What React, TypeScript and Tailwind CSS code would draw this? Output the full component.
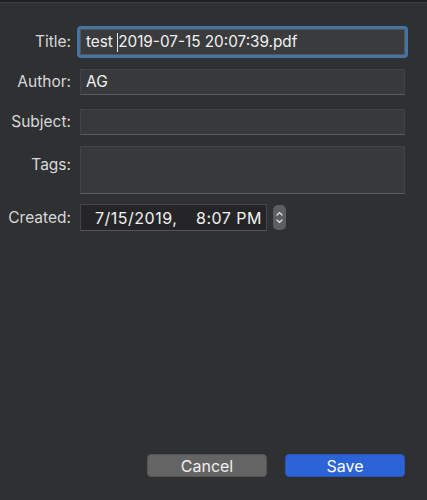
import React from "react";

const font = { fontFamily: "Inter, 'Liberation Sans', sans-serif" };

function Label({ children, className = "" }: { children: React.ReactNode; className?: string }) {
  return (
    <div className={`text-right text-[15.5px] text-[#d8d8d8] pr-[9px] leading-none ${className}`}>{children}</div>
  );
}

export default function App() {
  return (
    <div className="w-[427px] h-[500px] bg-[#2f3032] flex flex-col overflow-hidden" style={font}>
      <div className="h-[3px] bg-[#1f1f20] border-b border-[#3a3b3d]" />
      <div className="grid grid-cols-[80px_325px] pt-[26px] items-center">
        <Label>Title:</Label>
        <div className="h-[26px] bg-[#3a3b3d] border border-[#555] outline-3 outline-[#4673a4] rounded-[1px] flex items-center pl-[5px] text-[15.3px] text-[#f2f2f2] leading-none whitespace-pre">
          <span>test </span>
          <span className="inline-block w-[1px] h-[19px] bg-[#e8e8e8]" />
          <span>2019-07-15 20:07:39.pdf</span>
        </div>

        <div className="h-[14px] col-span-2" />
        <Label>Author:</Label>
        <div className="h-[26px] bg-[#38393b] border border-[#424345] border-b-[#5a5b5d] flex items-center pl-[5px] text-[15.5px] text-[#f2f2f2] leading-none">
          AG
        </div>

        <div className="h-[14px] col-span-2" />
        <Label>Subject:</Label>
        <div className="h-[26px] bg-[#38393b] border border-[#424345] border-b-[#5a5b5d]" />

        <div className="h-[11px] col-span-2" />
        <Label className="self-start pt-[11px]">Tags:</Label>
        <div className="h-[48px] bg-[#38393b] border border-[#424345] border-b-[#5a5b5d]" />

        <div className="h-[10px] col-span-2" />
        <Label>Created:</Label>
        <div className="flex items-center gap-[6px]">
          <div className="w-[187px] h-[27px] bg-[#252527] border border-[#444547] border-b-[#55565a] flex items-center justify-between pl-[14px] pr-[4px] text-[16px] tracking-[0.5px] text-[#f2f2f2] leading-none whitespace-pre">
            <span>7/15/2019,</span>
            <span>8:07 PM</span>
          </div>
          <div className="w-[13px] h-[25px] rounded-[5px] bg-[#5d5e60] flex flex-col items-center justify-center gap-[3px]">
            <svg width="7" height="5" viewBox="0 0 7 5">
              <path d="M1 4 L3.5 1.5 L6 4" fill="none" stroke="#e6e6e6" strokeWidth="1.2" strokeLinecap="round" />
            </svg>
            <svg width="7" height="5" viewBox="0 0 7 5">
              <path d="M1 1 L3.5 3.5 L6 1" fill="none" stroke="#e6e6e6" strokeWidth="1.2" strokeLinecap="round" />
            </svg>
          </div>
        </div>
      </div>
      <div className="flex-1" />
      <div className="flex justify-end gap-[18px] pr-[22px] pb-[23px]">
        <button className="w-[120px] h-[23px] rounded-[4px] bg-[#646464] border border-[#555] text-[16px] text-[#f0f0f0] leading-none">
          Cancel
        </button>
        <button className="w-[120px] h-[23px] rounded-[4px] bg-[#2c63d7] border border-[#2756b8] text-[16px] text-white leading-none">
          Save
        </button>
      </div>
    </div>
  );
}
